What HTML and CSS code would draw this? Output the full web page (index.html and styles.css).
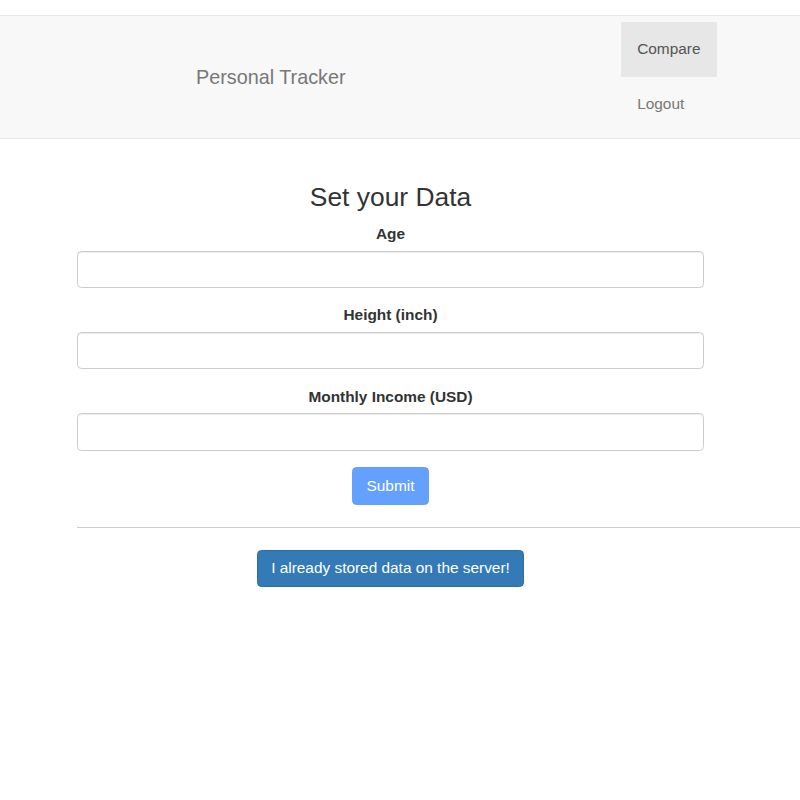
FILE: index.html
```html
<!DOCTYPE html>
<html lang="en">
<head>
<meta charset="utf-8">
<title>Personal Tracker</title>
<link rel="stylesheet" href="styles.css">
</head>
<body>
<nav class="navbar">
  <div class="navbar-inner">
    <a class="brand" href="#">Personal Tracker</a>
    <ul class="nav">
      <li class="nav-item active"><a href="#">Compare</a></li>
      <li class="nav-item"><a href="#">Logout</a></li>
    </ul>
  </div>
</nav>
<main class="page">
  <form class="data-form">
    <h3 class="title">Set your Data</h3>
    <div class="form-group">
      <label class="label" for="age">Age</label>
      <input class="form-control" id="age" type="text">
    </div>
    <div class="form-group">
      <label class="label" for="height">Height (inch)</label>
      <input class="form-control" id="height" type="text">
    </div>
    <div class="form-group">
      <label class="label" for="income">Monthly Income (USD)</label>
      <input class="form-control" id="income" type="text">
    </div>
    <div class="actions">
      <button class="btn btn-submit" type="button">Submit</button>
    </div>
  </form>
  <hr class="divider">
  <div class="actions column">
    <button class="btn btn-primary" type="button">I already stored data on the server!</button>
  </div>
</main>
</body>
</html>
```

FILE: styles.css
```css
* { box-sizing: border-box; }

html, body {
  margin: 0;
  padding: 0;
  background: #fff;
}

body {
  font-family: "Liberation Sans", Arial, Helvetica, sans-serif;
  font-size: 15.4px;
  line-height: 22px;
  color: #333;
}

a { text-decoration: none; }

.navbar {
  margin-top: 15px;
  margin-bottom: 22px;
  background: #f8f8f8;
  border-top: 1px solid #e7e7e7;
  border-bottom: 1px solid #e7e7e7;
}

.navbar-inner {
  display: flex;
  justify-content: space-between;
  padding: 0 83px 0 196px;
  height: 122px;
}

.brand {
  align-self: center;
  color: #777;
  font-size: 19.8px;
  line-height: 22px;
}

.nav {
  list-style: none;
  margin: 0;
  padding: 6px 0 0;
  display: flex;
  flex-direction: column;
}

.nav-item a {
  display: block;
  height: 55px;
  padding: 15.5px 16.5px 17.5px;
  line-height: 22px;
  color: #777;
}

.nav-item.active a {
  background: #e7e7e7;
  color: #555;
}

.page {
  display: flow-root;
  padding-left: 77px;
}

.data-form,
.column {
  width: 627px;
}

.title {
  margin: 22px 0 11px;
  font-size: 26.4px;
  line-height: 29px;
  font-weight: 500;
  text-align: center;
  color: #333;
}

.form-group {
  margin-bottom: 16.5px;
  text-align: center;
}

.label {
  display: block;
  margin-bottom: 5.5px;
  font-weight: bold;
  color: #333;
}

.form-control {
  display: block;
  width: 100%;
  height: 37.4px;
  padding: 6.6px 13.2px;
  font: inherit;
  color: #555;
  background: #fff;
  border: 1px solid #ccc;
  border-radius: 4.4px;
  box-shadow: inset 0 1px 1px rgba(0, 0, 0, .075);
}

.actions {
  display: flex;
  justify-content: center;
}

.btn {
  height: 37.4px;
  padding: 6.6px 13.2px;
  font: inherit;
  line-height: 22px;
  color: #fff;
  border: 1px solid transparent;
  border-radius: 4.4px;
  cursor: pointer;
}

.btn-submit {
  background: #64a1fe;
  border-color: #64a1fe;
}

.btn-primary {
  background: #337ab7;
  border-color: #2e6da4;
}

.divider {
  margin: 22px 0;
  border: 0;
  border-top: 1px solid #ccc;
}
```
